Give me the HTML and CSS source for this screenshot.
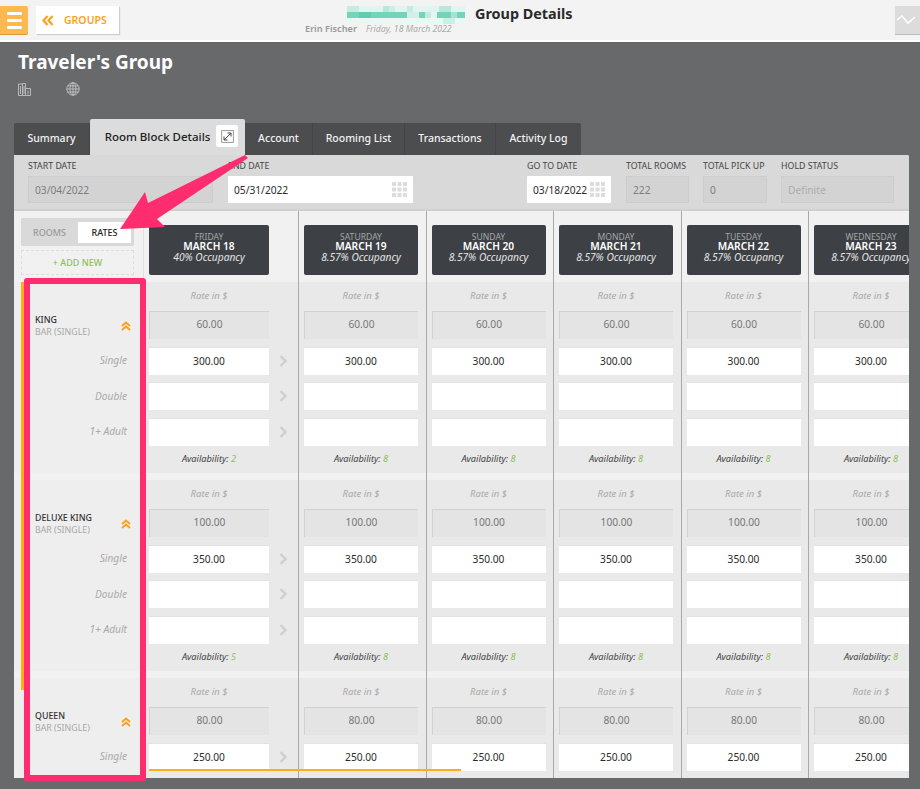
FILE: index.html
```html
<!DOCTYPE html>
<html lang="en">
<head>
<meta charset="utf-8">
<title>Group Details</title>
<link rel="stylesheet" href="styles.css">
</head>
<body>
<svg class="defs" width="0" height="0" aria-hidden="true">
  <symbol id="grid" viewBox="0 0 15 15"><g fill="#dcdcdc"><rect width="4" height="4"/><rect x="5.5" width="4" height="4"/><rect x="11" width="4" height="4"/><rect y="5.5" width="4" height="4"/><rect x="5.5" y="5.5" width="4" height="4"/><rect x="11" y="5.5" width="4" height="4"/><rect y="11" width="4" height="4"/><rect x="5.5" y="11" width="4" height="4"/><rect x="11" y="11" width="4" height="4"/></g></symbol>
  <symbol id="up" viewBox="0 0 10 10"><path d="M1 5 5 1.500 9 5M1 9 5 5.500 9 9" fill="none" stroke="#ff9f1c" stroke-width="2"/></symbol>
  <symbol id="next" viewBox="0 0 8 12"><path d="M1.500 1 6.500 6 1.500 11" fill="none" stroke="#cfcfcf" stroke-width="2.400"/></symbol>
</svg>
<header class="topbar">
  <button class="menu-btn" aria-label="Menu"><span></span><span></span><span></span></button>
  <button class="back-btn"><svg width="12" height="11" viewBox="0 0 12 11"><path d="M5.500 1 1.500 5.500 5.500 10M10.500 1 6.500 5.500 10.500 10" fill="none" stroke="#ff9f1c" stroke-width="2.200"/></svg>GROUPS</button>
  <div class="who">
    <svg class="pixels" width="118" height="18" viewBox="0 0 118 18" aria-hidden="true">
      <rect y="0" x="0" width="118" height="6" fill="#e0f5ef"/>
      <rect y="6" x="0" width="118" height="6" fill="#74d3b8"/>
      <rect y="12" x="0" width="118" height="6" fill="#eaf8f4"/>
      <rect x="0" y="0" width="12" height="6" fill="#c6ece1"/>
      <rect x="36" y="0" width="6" height="6" fill="#b8e8da"/>
      <rect x="42" y="0" width="6" height="6" fill="#cdeee5"/>
      <rect x="60" y="0" width="6" height="6" fill="#c6ece1"/>
      <rect x="60" y="6" width="12" height="6" fill="#d2f0e7"/>
      <rect x="78" y="6" width="6" height="6" fill="#c2ebdf"/>
      <rect x="84" y="6" width="6" height="6" fill="#e6f7f2"/>
      <rect x="92" y="0" width="12" height="6" fill="#b8e8da"/>
      <rect x="96" y="12" width="12" height="6" fill="#cdeee5"/>
      <rect x="12" y="6" width="12" height="6" fill="#5fcdae"/>
      <rect x="104" y="6" width="6" height="6" fill="#a6e3d1"/>
    </svg>
    <div class="who-line"><span class="who-name">Erin Fischer</span><span class="who-date">Friday, 18 March 2022</span></div>
  </div>
  <h1 class="page-title">Group Details</h1>
  <button class="pulse-btn" aria-label="Activity"><svg width="20" height="12" viewBox="0 0 20 12"><path d="M1 6 6 2 12 9 19 3" fill="none" stroke="#fff" stroke-width="1.600"/></svg></button>
</header>

<main class="main">
  <h2 class="group-name">Traveler's Group</h2>
  <div class="group-icons">
    <svg width="13" height="13" viewBox="0 0 13 13"><path d="M.5 1h4v11.500h-4zM4.500 .5h3v12h-3zM7.500 5.500h5v7h-5zM2.500 3v8M6 3v8M10 7.500v4" fill="none" stroke="#b9b9b9"/></svg>
    <svg width="14" height="14" viewBox="0 0 14 14"><g fill="none" stroke="#c4c4c4" stroke-width=".9"><circle cx="7" cy="7" r="6.200"/><ellipse cx="7" cy="7" rx="3" ry="6.200"/><path d="M7 .8v12.400M.8 7h12.400M1.700 4h10.600M1.700 10h10.600"/></g></svg>
  </div>

  <nav class="tabs">
    <span class="tab tab-summary">Summary</span>
    <span class="tab tab-active">Room Block Details<span class="expand"><svg width="13" height="13" viewBox="0 0 13 13"><path d="M.6.6h11.800v11.800H.6z" fill="none" stroke="#9a9a9a"/><path d="M3 10 10 3M6.500 3H10v3.500M3 6.500V10h3.500" fill="none" stroke="#444" stroke-width="1"/></svg></span></span>
    <span class="tab tab-account">Account</span>
    <span class="tab tab-rooming">Rooming List</span>
    <span class="tab tab-trans">Transactions</span>
    <span class="tab tab-log">Activity Log</span>
  </nav>

  <section class="panel">
    <div class="form">
      <div class="f f-start"><label>START DATE</label><div class="inp off">03/04/2022</div></div>
      <div class="f f-end"><label>END DATE</label><div class="inp on">05/31/2022<svg class="cal"><use href="#grid"/></svg></div></div>
      <div class="f f-go"><label>GO TO DATE</label><div class="inp on">03/18/2022<svg class="cal"><use href="#grid"/></svg></div></div>
      <div class="f f-rooms"><label>TOTAL ROOMS</label><div class="inp off">222</div></div>
      <div class="f f-pick"><label>TOTAL PICK UP</label><div class="inp off">0</div></div>
      <div class="f f-hold"><label>HOLD STATUS</label><div class="inp off faint">Definite</div></div>
    </div>

    <div class="board">
      <div class="col labels">
        <div class="head head-left">
          <div class="toggle"><span class="t-off">ROOMS</span><span class="t-on">RATES</span></div>
          <div class="add">+ ADD NEW</div>
        </div>
        <div class="block">
          <div class="room"><div><b>KING</b><i>BAR (SINGLE)</i></div><svg class="up"><use href="#up"/></svg></div>
          <div class="rl">Single</div><div class="rl">Double</div><div class="rl">1+ Adult</div>
        </div>
        <div class="block">
          <div class="room"><div><b>DELUXE KING</b><i>BAR (SINGLE)</i></div><svg class="up"><use href="#up"/></svg></div>
          <div class="rl">Single</div><div class="rl">Double</div><div class="rl">1+ Adult</div>
        </div>
        <div class="block">
          <div class="room"><div><b>QUEEN</b><i>BAR (SINGLE)</i></div><svg class="up"><use href="#up"/></svg></div>
          <div class="rl">Single</div>
        </div>
      </div>

      <div class="col day first">
        <div class="head"><div class="card"><span>FRIDAY</span><b>MARCH 18</b><i>40% Occupancy</i></div></div>
        <div class="block">
          <div class="rate">Rate in $</div><div class="row"><div class="cell base">60.00</div></div>
          <div class="row"><div class="cell">300.00</div><svg class="nx"><use href="#next"/></svg></div>
          <div class="row"><div class="cell"></div><svg class="nx"><use href="#next"/></svg></div>
          <div class="row"><div class="cell"></div><svg class="nx"><use href="#next"/></svg></div>
          <div class="avail">Availability: <em>2</em></div>
        </div>
        <div class="block">
          <div class="rate">Rate in $</div><div class="row"><div class="cell base">100.00</div></div>
          <div class="row"><div class="cell">350.00</div><svg class="nx"><use href="#next"/></svg></div>
          <div class="row"><div class="cell"></div><svg class="nx"><use href="#next"/></svg></div>
          <div class="row"><div class="cell"></div><svg class="nx"><use href="#next"/></svg></div>
          <div class="avail">Availability: <em>5</em></div>
        </div>
        <div class="block">
          <div class="rate">Rate in $</div><div class="row"><div class="cell base">80.00</div></div>
          <div class="row"><div class="cell">250.00</div><svg class="nx"><use href="#next"/></svg></div>
        </div>
      </div>

      <div class="col day">
        <div class="head"><div class="card"><span>SATURDAY</span><b>MARCH 19</b><i>8.57% Occupancy</i></div></div>
        <div class="block"><div class="rate">Rate in $</div><div class="row"><div class="cell base">60.00</div></div><div class="row"><div class="cell">300.00</div></div><div class="row"><div class="cell"></div></div><div class="row"><div class="cell"></div></div><div class="avail">Availability: <em>8</em></div></div>
        <div class="block"><div class="rate">Rate in $</div><div class="row"><div class="cell base">100.00</div></div><div class="row"><div class="cell">350.00</div></div><div class="row"><div class="cell"></div></div><div class="row"><div class="cell"></div></div><div class="avail">Availability: <em>8</em></div></div>
        <div class="block"><div class="rate">Rate in $</div><div class="row"><div class="cell base">80.00</div></div><div class="row"><div class="cell">250.00</div></div></div>
      </div>
      <div class="col day">
        <div class="head"><div class="card"><span>SUNDAY</span><b>MARCH 20</b><i>8.57% Occupancy</i></div></div>
        <div class="block"><div class="rate">Rate in $</div><div class="row"><div class="cell base">60.00</div></div><div class="row"><div class="cell">300.00</div></div><div class="row"><div class="cell"></div></div><div class="row"><div class="cell"></div></div><div class="avail">Availability: <em>8</em></div></div>
        <div class="block"><div class="rate">Rate in $</div><div class="row"><div class="cell base">100.00</div></div><div class="row"><div class="cell">350.00</div></div><div class="row"><div class="cell"></div></div><div class="row"><div class="cell"></div></div><div class="avail">Availability: <em>8</em></div></div>
        <div class="block"><div class="rate">Rate in $</div><div class="row"><div class="cell base">80.00</div></div><div class="row"><div class="cell">250.00</div></div></div>
      </div>
      <div class="col day">
        <div class="head"><div class="card"><span>MONDAY</span><b>MARCH 21</b><i>8.57% Occupancy</i></div></div>
        <div class="block"><div class="rate">Rate in $</div><div class="row"><div class="cell base">60.00</div></div><div class="row"><div class="cell">300.00</div></div><div class="row"><div class="cell"></div></div><div class="row"><div class="cell"></div></div><div class="avail">Availability: <em>8</em></div></div>
        <div class="block"><div class="rate">Rate in $</div><div class="row"><div class="cell base">100.00</div></div><div class="row"><div class="cell">350.00</div></div><div class="row"><div class="cell"></div></div><div class="row"><div class="cell"></div></div><div class="avail">Availability: <em>8</em></div></div>
        <div class="block"><div class="rate">Rate in $</div><div class="row"><div class="cell base">80.00</div></div><div class="row"><div class="cell">250.00</div></div></div>
      </div>
      <div class="col day">
        <div class="head"><div class="card"><span>TUESDAY</span><b>MARCH 22</b><i>8.57% Occupancy</i></div></div>
        <div class="block"><div class="rate">Rate in $</div><div class="row"><div class="cell base">60.00</div></div><div class="row"><div class="cell">300.00</div></div><div class="row"><div class="cell"></div></div><div class="row"><div class="cell"></div></div><div class="avail">Availability: <em>8</em></div></div>
        <div class="block"><div class="rate">Rate in $</div><div class="row"><div class="cell base">100.00</div></div><div class="row"><div class="cell">350.00</div></div><div class="row"><div class="cell"></div></div><div class="row"><div class="cell"></div></div><div class="avail">Availability: <em>8</em></div></div>
        <div class="block"><div class="rate">Rate in $</div><div class="row"><div class="cell base">80.00</div></div><div class="row"><div class="cell">250.00</div></div></div>
      </div>
      <div class="col day">
        <div class="head"><div class="card"><span>WEDNESDAY</span><b>MARCH 23</b><i>8.57% Occupancy</i></div></div>
        <div class="block"><div class="rate">Rate in $</div><div class="row"><div class="cell base">60.00</div></div><div class="row"><div class="cell">300.00</div></div><div class="row"><div class="cell"></div></div><div class="row"><div class="cell"></div></div><div class="avail">Availability: <em>8</em></div></div>
        <div class="block"><div class="rate">Rate in $</div><div class="row"><div class="cell base">100.00</div></div><div class="row"><div class="cell">350.00</div></div><div class="row"><div class="cell"></div></div><div class="row"><div class="cell"></div></div><div class="avail">Availability: <em>8</em></div></div>
        <div class="block"><div class="rate">Rate in $</div><div class="row"><div class="cell base">80.00</div></div><div class="row"><div class="cell">250.00</div></div></div>
      </div>
    </div>
  </section>
</main>

<div class="mark-v"></div>
<div class="mark-h"></div>
<div class="mark-box"></div>
<svg class="mark-arrow" width="920" height="789" viewBox="0 0 920 789" aria-hidden="true"><path d="M245 155 248 158 157 219 165 227 120 229 145 192 148 203Z" fill="#ff2d6f"/></svg>
</body>
</html>
```

FILE: styles.css
```css
* { box-sizing: border-box; }
html, body { margin: 0; height: 789px; overflow: hidden; }
body { position: relative; background: #68696b; font-family: "Noto Sans", "Open Sans", sans-serif; font-size: 10px; color: #333; }
.defs { position: absolute; }
button { border: 0; padding: 0; font: inherit; }

.topbar { display: flex; align-items: flex-start; height: 42px; padding-top: 6px; background: #f3f3f3; border-bottom: 2px solid #fff; }
.menu-btn { display: flex; flex-direction: column; justify-content: center; gap: 4px; align-items: center; width: 28px; height: 28px; background: #fdb94f; border-radius: 0 2px 2px 0; box-shadow: 0 1px 0 #d99a38; }
.menu-btn span { width: 15px; height: 3px; background: #fff; border-radius: 1px; }
.back-btn { display: flex; align-items: center; gap: 10px; margin-left: 8px; width: 83px; height: 28px; padding-left: 6px; background: #fff; color: #ff9f1c; font-size: 10.500px; font-weight: 600; box-shadow: 1px 1px 1px #ccc; }
.who { margin-left: 186px; width: 170px; position: relative; height: 28px; }
.pixels { position: absolute; left: 42px; top: 0; }
.who-line { position: absolute; top: 15px; left: 0; white-space: nowrap; line-height: 14px; }
.who-name { font-size: 9.200px; font-weight: 600; color: #999; }
.who-date { margin-left: 9px; font-size: 8.700px; font-style: italic; color: #aaa; }
.page-title { margin: -1px 0 0; font-size: 14.400px; line-height: 18px; font-weight: 700; color: #2a2a2a; }
.pulse-btn { margin-left: auto; width: 25px; height: 28px; background: #dcdcdc; box-shadow: 0 1px 0 #bbb; padding-right: 4px; display: flex; align-items: center; justify-content: center; }

.main { padding: 7px 11px 0 14px; }
.group-name { margin: 0 0 0 4px; font-size: 19px; line-height: 26px; font-weight: 700; color: #fff; }
.group-icons { display: flex; gap: 35px; align-items: center; margin: 7px 0 0 4px; height: 14px; }

.tabs { display: flex; align-items: flex-end; height: 36px; margin-top: 23px; }
.tab { display: flex; align-items: center; justify-content: center; height: 32px; padding-bottom: 2px; background: #4c4d4f; color: #f2f2f2; font-size: 10.500px; font-weight: 500; border-right: 1px solid #444; }
.tab-summary { width: 76px; border-radius: 2px 0 0 0; }
.tab-active { width: 155px; height: 36px; background: #dcdcdc; color: #222; font-size: 11.500px; gap: 6px; padding: 0 0 2px 8px; border: 0; border-radius: 2px 2px 0 0; }
.expand { display: flex; align-items: center; justify-content: center; width: 22px; height: 22px; background: #fff; border-radius: 2px; }
.tab-account { width: 68px; }
.tab-rooming { width: 92px; }
.tab-trans { width: 91px; }
.tab-log { width: 85px; border: 0; border-radius: 0 2px 0 0; }

.panel { width: 895px; height: 623px; overflow: hidden; background: #f1f1f1; border-radius: 0 2px 0 0; }
.form { position: relative; height: 56px; background: #d9d9d9; border-bottom: 2px solid #cfcfcf; display: flex; padding: 6px 0 0 14px; }
.f { flex: none; }
.f label { display: block; font-size: 8.800px; line-height: 10px; color: #444; height: 15px; }
.inp { position: relative; display: flex; align-items: center; height: 27px; padding-left: 7px; font-size: 10.200px; }
.inp.off { background: #d3d3d3; color: #7e7e7e; box-shadow: inset 0 0 0 1px #cdcdcd; }
.inp.on { background: #fff; color: #2a2a2a; padding-left: 6px; border-radius: 1px; }
.inp.faint { color: #adadad; }
.cal { position: absolute; right: 6px; top: 6px; width: 15px; height: 15px; }
.f-start { width: 200px; } .f-start .inp { width: 185px; }
.f-end { width: 299px; } .f-end .inp { width: 185px; }
.f-go { width: 99px; } .f-go .inp { width: 84px; }
.f-rooms { width: 77px; } .f-rooms .inp { width: 63px; }
.f-pick { width: 78px; } .f-pick .inp { width: 64px; }
.f-hold { width: 113px; } .f-hold .inp { width: 113px; }

.board { display: flex; }
.col { flex: none; }
.labels { width: 129px; }
.day { width: 127.500px; border-left: 1px solid #a9a9a9; }
.first { width: 155px; border-left: 1px solid #e1e1e1; }
.head { height: 71px; padding: 14px 0 0 5px; }
.head-left { padding: 7px 0 0 7px; }
.toggle { display: flex; width: 113px; height: 28px; padding: 4px 3px 3px 0; background: #d9d9d9; border-radius: 1px; }
.t-off { width: 57px; text-align: center; line-height: 21px; font-size: 9px; color: #9a9a9a; font-weight: 500; }
.t-on { width: 53px; text-align: center; line-height: 21px; font-size: 9px; font-weight: 500; color: #222; background: #fff; }
.add { width: 113px; height: 25px; margin-top: 4px; border: 1px dashed #ddd; text-align: center; line-height: 24px; font-size: 9px; font-weight: 500; color: #8cc152; }
.card { display: flex; flex-direction: column; align-items: center; width: 114px; height: 50px; padding-top: 8px; background: #3d4044; border-radius: 2px; color: #fff; white-space: nowrap; overflow: hidden; }
.first .card { width: 120px; }
.card span { font-size: 8.600px; line-height: 8px; color: #a4a6a8; }
.card b { font-size: 10.200px; line-height: 10px; font-weight: 600; }
.card i { font-size: 10.200px; line-height: 12px; color: #e4e4e4; }

.block { height: 191px; margin-bottom: 7px; background: #e9e9e9; padding-left: 5px; }
.labels .block { background: #eee; padding-left: 21px; }
.rate { height: 29px; padding-top: 5px; width: 114px; text-align: center; line-height: 17px; font-size: 9.500px; font-style: italic; color: #a8a8a8; }
.first .rate, .first .avail { width: 120px; }
.row { display: flex; align-items: center; height: 28px; margin-bottom: 7.500px; }
.cell { width: 114px; height: 100%; padding-bottom: 1px; display: flex; align-items: center; justify-content: center; background: #fff; border-top: 1px solid #e2e2e2; font-size: 10.200px; color: #2a2a2a; }
.first .cell { width: 120px; }
.cell.base { padding-bottom: 3px; background: #e4e4e4; color: #777; border: 1px solid #d2d2d2; border-right: 0; border-bottom: 0; }
.nx { width: 8px; height: 12px; margin-left: 10px; }
.avail { width: 114px; text-align: center; line-height: 12px; font-size: 9.200px; font-style: italic; color: #444; }
.avail em { color: #8cc152; }

.room { display: flex; align-items: center; justify-content: space-between; height: 64px; padding: 24px 6px 0 0; width: 102px; }
.room b { display: block; font-size: 8.800px; line-height: 12px; font-weight: 500; color: #333; }
.room i { display: block; font-size: 8.800px; line-height: 12px; font-style: normal; color: #a8a8a8; white-space: nowrap; }
.up { width: 10px; height: 10px; }
.rl { width: 92px; height: 35.500px; text-align: right; line-height: 28px; font-size: 10.200px; font-style: italic; color: #aaa; }

.mark-v { position: absolute; left: 21px; top: 282px; width: 3px; height: 408px; background: #ffae1a; }
.mark-h { position: absolute; left: 149px; top: 769px; width: 312px; height: 2px; background: #ffae1a; }
.mark-box { position: absolute; left: 24px; top: 278px; width: 122px; height: 503px; border: 6px solid #ff2d6f; border-radius: 3px; }
.mark-arrow { position: absolute; left: 0; top: 0; pointer-events: none; }
```
